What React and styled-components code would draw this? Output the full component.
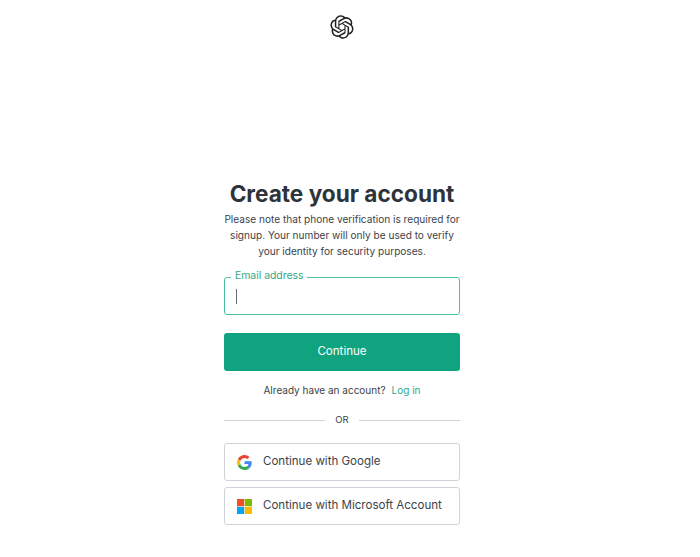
import React from 'react';
import styled, { createGlobalStyle } from 'styled-components';

const GlobalStyle = createGlobalStyle`
  html, body {
    margin: 0;
    padding: 0;
    background: #fff;
    overflow: hidden;
  }
  body {
    font-family: Inter, "Liberation Sans", sans-serif;
    color: #2d333a;
  }
`;

const Page = styled.div`
  width: 684px;
  height: 557px;
  display: flex;
  flex-direction: column;
  align-items: center;
`;

const Header = styled.header`
  padding-top: 15px;
  height: 179px;
  box-sizing: border-box;
  display: flex;
  justify-content: center;
`;

const Card = styled.main`
  width: 236px;
  display: flex;
  flex-direction: column;
`;

const Title = styled.h1`
  margin: 0;
  font-size: 22.6px;
  line-height: 29px;
  font-weight: 700;
  text-align: center;
  color: #2d333a;
`;

const Note = styled.p`
  margin: 3px 0 0;
  font-size: 10.1px;
  line-height: 16px;
  text-align: center;
  color: #3d434a;
`;

const Field = styled.div`
  position: relative;
  margin-top: 18px;
  height: 38px;
  box-sizing: border-box;
  border: 1px solid #4fbfa3;
  border-radius: 3px;
  display: flex;
  align-items: center;
  padding-left: 11px;
`;

const FieldLabel = styled.label`
  position: absolute;
  top: -9px;
  left: 6px;
  padding: 0 4px;
  background: #fff;
  font-size: 10.4px;
  line-height: 14px;
  color: #2fa98b;
`;

const Caret = styled.span`
  width: 1px;
  height: 15px;
  background: #666b71;
`;

const SubmitButton = styled.button`
  margin-top: 18px;
  height: 38px;
  border: 0;
  border-radius: 3px;
  background: #10a37f;
  color: #fff;
  font-family: inherit;
  font-size: 11.55px;
  font-weight: 400;
  padding: 0 0 2px;
`;

const LoginLine = styled.p`
  margin: 11px 0 0;
  font-size: 10px;
  line-height: 16px;
  text-align: center;
  color: #3d434a;
`;

const LoginLink = styled.a`
  margin-left: 6px;
  color: #2fa98b;
  text-decoration: none;
`;

const Divider = styled.div`
  margin-top: 15px;
  display: flex;
  align-items: center;
  gap: 10px;
  font-size: 9.5px;
  line-height: 14px;
  color: #3d434a;

  &::before,
  &::after {
    content: '';
    flex: 1;
    height: 1px;
    background: #d0d4da;
  }
`;

const Socials = styled.div`
  margin-top: 16px;
  display: flex;
  flex-direction: column;
  gap: 6px;
`;

const SocialButton = styled.button`
  height: 38px;
  box-sizing: border-box;
  border: 1px solid #d0d4da;
  border-radius: 3px;
  background: #fff;
  display: flex;
  align-items: center;
  gap: 11px;
  padding: 0 0 0 12px;
  font-family: inherit;
  font-size: 11.55px;
  color: #3d434a;
  text-align: left;
`;

const SocialLabel = styled.span`
  margin-top: -2px;
`;

const OpenAiLogo = () => (
  <svg width="24" height="24" viewBox="0 0 41 41" fill="#202123">
    <path d="M37.5324 16.8707C37.9808 15.5241 38.1363 14.0974 37.9886 12.6859C37.8409 11.2744 37.3934 9.91076 36.676 8.68622C35.6126 6.83404 33.9882 5.3676 32.0373 4.4985C30.0864 3.62941 27.9098 3.40259 25.8215 3.85078C24.8796 2.7893 23.7219 1.94125 22.4257 1.36341C21.1295 0.785575 19.7249 0.491269 18.3058 0.500197C16.1708 0.495044 14.0893 1.16803 12.3614 2.42214C10.6335 3.67624 9.34853 5.44666 8.6917 7.47815C7.30085 7.76286 5.98686 8.3414 4.8377 9.17505C3.68854 10.0087 2.73073 11.0782 2.02839 12.312C0.956464 14.1591 0.498905 16.2988 0.721698 18.4228C0.944492 20.5467 1.83612 22.5449 3.268 24.1293C2.81966 25.4759 2.66413 26.9026 2.81182 28.3141C2.95951 29.7256 3.40701 31.0892 4.12437 32.3138C5.18791 34.1659 6.8123 35.6322 8.76321 36.5013C10.7141 37.3704 12.8907 37.5973 14.9789 37.1492C15.9208 38.2107 17.0786 39.0587 18.3747 39.6366C19.6709 40.2144 21.0755 40.5087 22.4946 40.4998C24.6307 40.5054 26.7133 39.8321 28.4418 38.5772C30.1704 37.3223 31.4556 35.5506 32.1119 33.5179C33.5027 33.2332 34.8167 32.6547 35.9659 31.821C37.115 30.9874 38.0728 29.9178 38.7752 28.684C39.8458 26.8371 40.3023 24.6979 40.0789 22.5748C39.8556 20.4517 38.9639 18.4544 37.5324 16.8707ZM22.4978 37.8849C20.7443 37.8874 19.0459 37.2733 17.6994 36.1501C17.7601 36.117 17.8666 36.0586 17.936 36.0161L25.9004 31.4156C26.1003 31.3019 26.2663 31.137 26.3813 30.9378C26.4964 30.7386 26.5563 30.5124 26.5549 30.2825V19.0542L29.9213 20.998C29.9389 21.0068 29.9541 21.0198 29.9656 21.0359C29.977 21.052 29.9842 21.0707 29.9867 21.0902V30.3889C29.9842 32.375 29.1946 34.2791 27.7909 35.6841C26.3872 37.0892 24.4838 37.8806 22.4978 37.8849ZM6.39227 31.0064C5.51397 29.4888 5.19742 27.7107 5.49804 25.9832C5.55718 26.0187 5.66048 26.0818 5.73461 26.1244L13.699 30.7248C13.8975 30.8408 14.1233 30.902 14.3532 30.902C14.583 30.902 14.8088 30.8408 15.0073 30.7248L24.731 25.1103V28.9979C24.7321 29.0177 24.7283 29.0376 24.7199 29.0556C24.7115 29.0736 24.6988 29.0893 24.6829 29.1012L16.6317 33.7497C14.9096 34.7416 12.8643 35.0097 10.9447 34.4954C9.02506 33.9811 7.38785 32.7263 6.39227 31.0064ZM4.29707 13.6194C5.17156 12.0998 6.55279 10.9364 8.19885 10.3327C8.19885 10.4013 8.19491 10.5228 8.19491 10.6071V19.808C8.19351 20.0378 8.25334 20.2638 8.36823 20.4629C8.48312 20.6619 8.64893 20.8267 8.84863 20.9404L18.5723 26.5542L15.206 28.4979C15.1894 28.5089 15.1703 28.5155 15.1505 28.5173C15.1307 28.5191 15.1107 28.516 15.0924 28.5082L7.04046 23.8557C5.32135 22.8601 4.06716 21.2235 3.55289 19.3046C3.03862 17.3858 3.30624 15.3413 4.29707 13.6194ZM31.955 20.0556L22.2312 14.4411L25.5976 12.4981C25.6142 12.4872 25.6333 12.4805 25.6531 12.4787C25.6729 12.4769 25.6928 12.4801 25.7111 12.4879L33.7631 17.1364C34.9967 17.849 36.0017 18.8982 36.6606 20.1613C37.3194 21.4244 37.6047 22.849 37.4832 24.2684C37.3617 25.6878 36.8382 27.0432 35.9743 28.1759C35.1103 29.3086 33.9415 30.1717 32.6047 30.6641C32.6047 30.5947 32.6047 30.4733 32.6047 30.3889V21.188C32.6066 20.9586 32.5474 20.7328 32.4332 20.5338C32.319 20.3348 32.154 20.1698 31.955 20.0556ZM35.3055 15.0128C35.2464 14.9765 35.1431 14.9142 35.069 14.8717L27.1045 10.2712C26.906 10.1554 26.6803 10.0943 26.4504 10.0943C26.2206 10.0943 25.9948 10.1554 25.7963 10.2712L16.0726 15.8858V11.9982C16.0715 11.9783 16.0753 11.9585 16.0837 11.9405C16.0921 11.9225 16.1048 11.9068 16.1207 11.8949L24.1719 7.25025C25.4053 6.53903 26.8158 6.19376 28.2383 6.25482C29.6608 6.31589 31.0364 6.78077 32.2044 7.59508C33.3723 8.40939 34.2842 9.53945 34.8334 10.8531C35.3826 12.1667 35.5464 13.6095 35.3055 15.0128ZM14.2424 21.9419L10.8752 19.9981C10.8576 19.9893 10.8423 19.9763 10.8309 19.9602C10.8195 19.9441 10.8122 19.9254 10.8098 19.9058V10.6071C10.8107 9.18295 11.2173 7.78848 11.9819 6.58696C12.7466 5.38544 13.8377 4.42659 15.1275 3.82264C16.4173 3.21869 17.8524 2.99464 19.2649 3.1767C20.6775 3.35876 22.0089 3.93941 23.1034 4.85067C23.0427 4.88379 22.937 4.94215 22.8668 4.98473L14.9024 9.58517C14.7025 9.69878 14.5366 9.86356 14.4215 10.0626C14.3065 10.2616 14.2466 10.4877 14.2479 10.7175L14.2424 21.9419ZM16.071 17.9991L20.4018 15.4978L24.7325 17.9975V22.9985L20.4018 25.4983L16.071 22.9985V17.9991Z" />
  </svg>
);

const GoogleLogo = () => (
  <svg width="15" height="15" viewBox="0 0 48 48">
    <path fill="#EA4335" d="M24 9.5c3.54 0 6.71 1.22 9.21 3.6l6.85-6.85C35.9 2.38 30.47 0 24 0 14.62 0 6.51 5.38 2.56 13.22l7.98 6.19C12.43 13.72 17.74 9.5 24 9.5z" />
    <path fill="#4285F4" d="M46.98 24.55c0-1.57-.15-3.09-.38-4.55H24v9.02h12.94c-.58 2.96-2.26 5.48-4.78 7.18l7.73 6c4.51-4.18 7.09-10.36 7.09-17.65z" />
    <path fill="#FBBC05" d="M10.53 28.59c-.48-1.45-.76-2.99-.76-4.59s.27-3.14.76-4.59l-7.98-6.19C.92 16.46 0 20.12 0 24c0 3.88.92 7.54 2.56 10.78l7.97-6.19z" />
    <path fill="#34A853" d="M24 48c6.48 0 11.93-2.13 15.89-5.81l-7.73-6c-2.15 1.45-4.92 2.3-8.16 2.3-6.26 0-11.57-4.22-13.47-9.91l-7.98 6.19C6.51 42.62 14.62 48 24 48z" />
  </svg>
);

const MicrosoftLogo = () => (
  <svg width="15" height="15" viewBox="0 0 15 15">
    <rect x="0" y="0" width="7.2" height="7.2" fill="#f25022" />
    <rect x="7.8" y="0" width="7.2" height="7.2" fill="#7fba00" />
    <rect x="0" y="7.8" width="7.2" height="7.2" fill="#00a4ef" />
    <rect x="7.8" y="7.8" width="7.2" height="7.2" fill="#ffb900" />
  </svg>
);

export default function App() {
  return (
    <Page>
      <GlobalStyle />
      <Header>
        <OpenAiLogo />
      </Header>
      <Card>
        <Title>Create your account</Title>
        <Note>
          Please note that phone verification is required for signup. Your number will only be used to verify your identity for security purposes.
        </Note>
        <Field>
          <FieldLabel>Email address</FieldLabel>
          <Caret />
        </Field>
        <SubmitButton>Continue</SubmitButton>
        <LoginLine>
          Already have an account?
          <LoginLink>Log in</LoginLink>
        </LoginLine>
        <Divider>OR</Divider>
        <Socials>
          <SocialButton>
            <GoogleLogo />
            <SocialLabel>Continue with Google</SocialLabel>
          </SocialButton>
          <SocialButton>
            <MicrosoftLogo />
            <SocialLabel>Continue with Microsoft Account</SocialLabel>
          </SocialButton>
        </Socials>
      </Card>
    </Page>
  );
}
